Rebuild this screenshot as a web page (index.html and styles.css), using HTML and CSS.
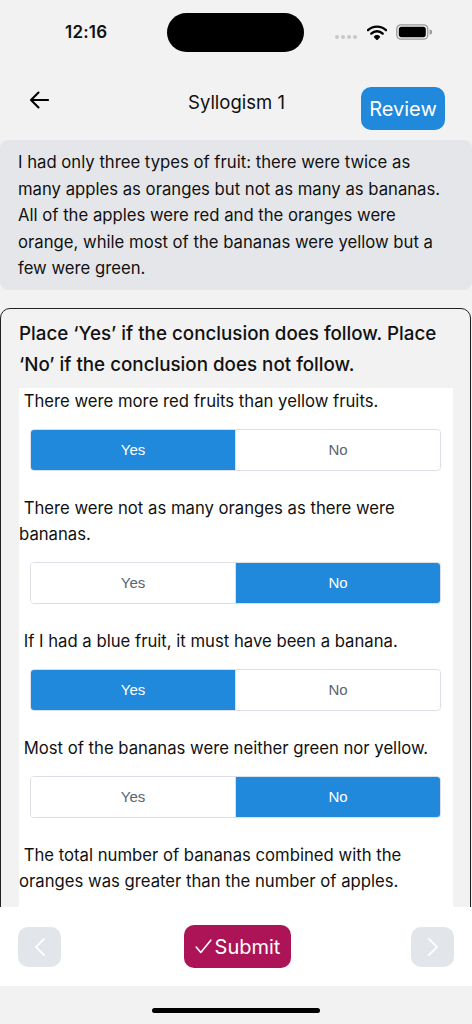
FILE: index.html
```html
<!DOCTYPE html>
<html lang="en">
<head>
    <meta charset="UTF-8">
    <meta name="viewport" content="width=device-width, initial-scale=1.0">
    <title>Syllogism 1</title>
    <link rel="stylesheet" href="styles.css">
</head>
<body>

<div class="status-bar">
    <span class="time">12:16</span>
    <div class="island"></div>
    <div class="status-icons">
        <span class="signal"><i></i><i></i><i></i><i></i></span>
        <svg class="wifi" width="20" height="15" viewBox="0 0 20 15">
            <path d="M1 5.2 A13 13 0 0 1 19 5.2" fill="none" stroke="#000" stroke-width="2.4" stroke-linecap="round"/>
            <path d="M4.3 8.6 A8.2 8.2 0 0 1 15.7 8.6" fill="none" stroke="#000" stroke-width="2.4" stroke-linecap="round"/>
            <path d="M7.4 11.8 A3.6 3.6 0 0 1 12.6 11.8 L10 14.5 Z" fill="#000" stroke="#000" stroke-width="1.2" stroke-linejoin="round"/>
        </svg>
        <svg class="battery" width="36" height="16" viewBox="0 0 36 16">
            <rect x="0.8" y="0.8" width="31" height="14.4" rx="4.2" fill="none" stroke="#999" stroke-width="1.3"/>
            <rect x="2.8" y="2.8" width="27" height="10.4" rx="2.6" fill="#000"/>
            <path d="M33.6 5.5 a2 2 0 0 1 0 5 z" fill="#999"/>
        </svg>
    </div>
</div>

<div class="header">
    <button class="back-btn">
        <svg width="20" height="18" viewBox="0 0 20 18">
            <path d="M19 9 H2 M9.5 1.5 L2 9 L9.5 16.5" fill="none" stroke="#000" stroke-width="2.1" stroke-linecap="round" stroke-linejoin="round"/>
        </svg>
    </button>
    <h1 class="title">Syllogism 1</h1>
    <button class="review-btn">Review</button>
</div>

<div class="content">
    <div class="passage">
        I had only three types of fruit: there were twice as many apples as oranges but not as many as bananas. All of the apples were red and the oranges were orange, while most of the bananas were yellow but a few were green.
    </div>

    <div class="question-card">
        <div class="instructions">Place ‘Yes’ if the conclusion does follow. Place ‘No’ if the conclusion does not follow.</div>

        <div class="statements">
            <div class="statement">
                <p class="statement-text">&nbsp;There were more red fruits than yellow fruits.</p>
                <div class="segmented">
                    <button class="seg active">Yes</button>
                    <button class="seg">No</button>
                </div>
            </div>

            <div class="statement">
                <p class="statement-text">&nbsp;There were not as many oranges as there were bananas.</p>
                <div class="segmented">
                    <button class="seg">Yes</button>
                    <button class="seg active">No</button>
                </div>
            </div>

            <div class="statement">
                <p class="statement-text">&nbsp;If I had a blue fruit, it must have been a banana.</p>
                <div class="segmented">
                    <button class="seg active">Yes</button>
                    <button class="seg">No</button>
                </div>
            </div>

            <div class="statement">
                <p class="statement-text">&nbsp;Most of the bananas were neither green nor yellow.</p>
                <div class="segmented">
                    <button class="seg">Yes</button>
                    <button class="seg active">No</button>
                </div>
            </div>

            <div class="statement">
                <p class="statement-text">&nbsp;The total number of bananas combined with the oranges was greater than the number of apples.</p>
                <div class="segmented">
                    <button class="seg">Yes</button>
                    <button class="seg">No</button>
                </div>
            </div>
        </div>
    </div>
</div>

<div class="bottom-bar">
    <button class="nav-btn">
        <svg width="12" height="20" viewBox="0 0 12 20">
            <path d="M10 2 L2 10 L10 18" fill="none" stroke="#fff" stroke-width="1.8" stroke-linecap="round" stroke-linejoin="round"/>
        </svg>
    </button>
    <button class="submit-btn">
        <svg width="17" height="15" viewBox="0 0 17 15">
            <path d="M1.2 8 L5.8 13.4 L15.8 1.2" fill="none" stroke="#fff" stroke-width="1.6" stroke-linecap="round" stroke-linejoin="round"/>
        </svg>
        Submit
    </button>
    <button class="nav-btn">
        <svg width="12" height="20" viewBox="0 0 12 20">
            <path d="M2 2 L10 10 L2 18" fill="none" stroke="#fff" stroke-width="1.8" stroke-linecap="round" stroke-linejoin="round"/>
        </svg>
    </button>
</div>

<div class="home-area">
    <div class="home-indicator"></div>
</div>

</body>
</html>
```

FILE: styles.css
```css
* {
    box-sizing: border-box;
}

body {
    margin: 0;
    height: 1024px;
    display: flex;
    flex-direction: column;
    background: #f2f2f2;
    font-family: Inter, "Liberation Sans", Arial, sans-serif;
    color: #111;
    overflow: hidden;
}

button {
    font-family: inherit;
    cursor: pointer;
}

/* status bar */
.status-bar {
    height: 64px;
    display: flex;
    align-items: center;
    padding-left: 65px;
}

.time {
    width: 47px;
    font-size: 17px;
    font-weight: 600;
    letter-spacing: 0.2px;
}

.island {
    width: 137px;
    height: 39px;
    margin-left: 55px;
    background: #000;
    border-radius: 20px;
}

.status-icons {
    display: flex;
    align-items: center;
    margin-left: 31px;
}

.signal {
    display: flex;
    gap: 2px;
    margin-top: 10px;
}

.signal i {
    width: 4px;
    height: 4px;
    border-radius: 50%;
    background: #c8c8c8;
}

.wifi {
    margin-left: 10px;
}

.battery {
    margin-left: 9px;
}

/* header */
.header {
    height: 76px;
    display: flex;
    align-items: center;
    padding: 0 27px 0 28px;
}

.back-btn {
    background: none;
    border: none;
    padding: 0;
    width: 22px;
    height: 22px;
    display: flex;
    align-items: center;
    justify-content: center;
    margin-top: -4px;
}

.title {
    flex: 1;
    margin: 0;
    text-align: center;
    font-size: 18.5px;
    font-weight: 400;
    padding-left: 62px;
}

.review-btn {
    width: 84px;
    height: 43px;
    margin-top: 13px;
    background: #2189dc;
    color: #fff;
    border: none;
    border-radius: 10px;
    font-size: 20px;
}

/* scrolling content */
.content {
    flex: 1;
    overflow: hidden;
}

.passage {
    background: #e5e6ea;
    border-radius: 8px;
    padding: 9px 18px 8px;
    font-size: 16.7px;
    line-height: 26.5px;
}

.question-card {
    margin-top: 18px;
    border: 1px solid #222;
    border-radius: 10px;
    padding: 9px 17px 0 18px;
    margin-right: 1px;
}

.instructions {
    font-size: 18.8px;
    font-weight: 500;
    line-height: 31px;
}

.statements {
    background: #fff;
    margin-top: 8px;
}

.statement {
    padding-bottom: 24px;
}

.statement-text {
    margin: 0;
    font-size: 16.7px;
    line-height: 26px;
}

.segmented {
    display: flex;
    margin: 15px 12px 0 11px;
    height: 42px;
    border: 1px solid #dcdfe6;
    border-radius: 4px;
    overflow: hidden;
}

.seg {
    flex: 1;
    border: none;
    background: #fff;
    color: #5a6473;
    font-size: 15px;
    font-family: "Liberation Sans", Arial, sans-serif;
}

.seg + .seg {
    border-left: 1px solid #dcdfe6;
}

.seg.active {
    background: #2189dc;
    color: #fff;
}

/* bottom bar */
.bottom-bar {
    height: 79px;
    background: #fff;
    display: flex;
    align-items: center;
    justify-content: space-between;
    padding: 0 18px;
}

.nav-btn {
    width: 43px;
    height: 40px;
    border: none;
    border-radius: 10px;
    background: #e2e5e9;
    display: flex;
    align-items: center;
    justify-content: center;
}

.submit-btn {
    height: 43px;
    width: 107px;
    border: none;
    border-radius: 10px;
    background: #ad1457;
    color: #fff;
    font-size: 20px;
    display: flex;
    align-items: center;
    justify-content: center;
    gap: 3px;
    margin-left: 3px;
}

.home-area {
    height: 38px;
    display: flex;
    justify-content: center;
    padding-top: 22px;
}

.home-indicator {
    width: 168px;
    height: 5px;
    background: #000;
    border-radius: 3px;
}
```
